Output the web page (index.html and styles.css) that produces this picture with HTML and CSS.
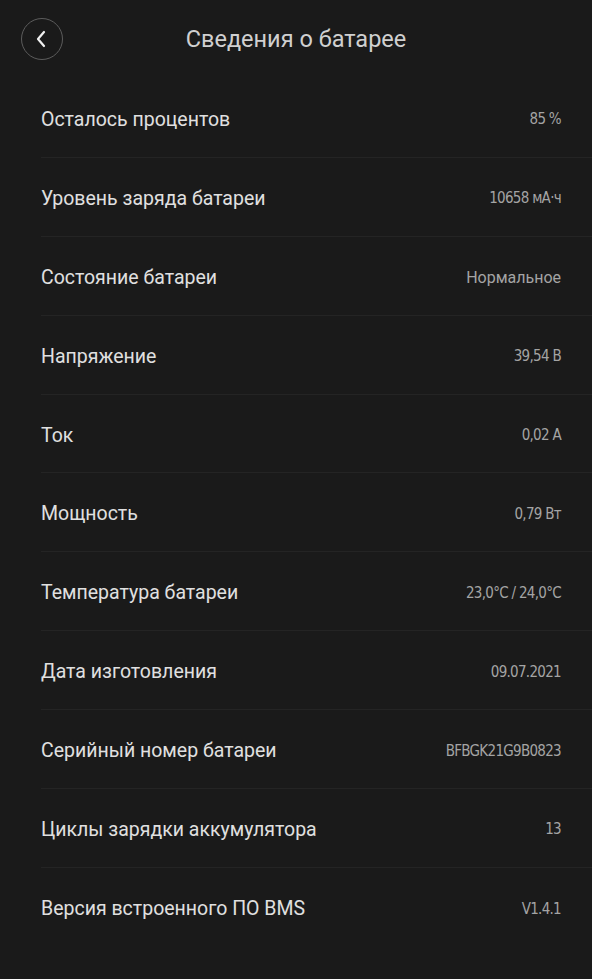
FILE: index.html
```html
<!DOCTYPE html>
<html lang="ru">
<head>
<meta charset="utf-8">
<link rel="stylesheet" href="styles.css">
</head>
<body>
<div class="screen">
  <header class="header">
    <button class="back" aria-label="Назад">
      <svg width="14" height="18" viewBox="0 0 14 18"><path d="M10 2 L4 9 L10 16" fill="none" stroke="#f0f0f0" stroke-width="2.2" stroke-linecap="round" stroke-linejoin="round"/></svg>
    </button>
    <h1 class="title">Сведения о батарее</h1>
  </header>
  <ul class="list">
    <li class="row"><span class="label">Осталось процентов</span><span class="value">85 %</span></li>
    <li class="row"><span class="label">Уровень заряда батареи</span><span class="value">10658 мА·ч</span></li>
    <li class="row"><span class="label">Состояние батареи</span><span class="value text">Нормальное</span></li>
    <li class="row"><span class="label">Напряжение</span><span class="value">39,54 В</span></li>
    <li class="row"><span class="label">Ток</span><span class="value">0,02 А</span></li>
    <li class="row"><span class="label">Мощность</span><span class="value">0,79 Вт</span></li>
    <li class="row"><span class="label">Температура батареи</span><span class="value">23,0°C / 24,0°C</span></li>
    <li class="row"><span class="label">Дата изготовления</span><span class="value">09.07.2021</span></li>
    <li class="row"><span class="label">Серийный номер батареи</span><span class="value">BFBGK21G9B0823</span></li>
    <li class="row"><span class="label">Циклы зарядки аккумулятора</span><span class="value">13</span></li>
    <li class="row last"><span class="label">Версия встроенного ПО BMS</span><span class="value">V1.4.1</span></li>
  </ul>
</div>
</body>
</html>
```
FILE: styles.css
```css
html, body {
  margin: 0;
  padding: 0;
  background: #1a1a1a;
}
.screen {
  width: 592px;
  min-height: 979px;
  background: #1a1a1a;
  font-family: Roboto, "Noto Sans", sans-serif;
}
.header {
  position: relative;
  height: 79px;
  display: flex;
  align-items: center;
  justify-content: center;
}
.back {
  position: absolute;
  left: 21px;
  top: 18px;
  width: 42px;
  height: 42px;
  border-radius: 50%;
  border: 1px solid #5c5c5c;
  background: transparent;
  padding: 0;
  display: flex;
  align-items: center;
  justify-content: center;
}
.back svg { margin-left: -3px; }
.title {
  margin: 0 0 2px 0;
  font-size: 23.5px;
  font-weight: 400;
  color: #d0d0d0;
}
.list {
  list-style: none;
  margin: 0;
  padding: 0 0 0 41px;
}
.row {
  height: 78.9px;
  box-sizing: border-box;
  border-bottom: 1px solid #242424;
  display: flex;
  align-items: center;
  justify-content: space-between;
  padding-right: 31px;
  padding-top: 3px;
}
.row.last { border-bottom: none; }
.label {
  font-size: 19.5px;
  color: #e0e0e0;
}
.value {
  font-family: "DejaVu Sans Condensed", "DejaVu Sans", sans-serif;
  font-size: 15px;
  letter-spacing: -0.7px;
  color: #a4a4a4;
}
.value.text {
  font-family: Roboto, "Noto Sans", sans-serif;
  font-size: 16px;
  letter-spacing: 0;
}
```
